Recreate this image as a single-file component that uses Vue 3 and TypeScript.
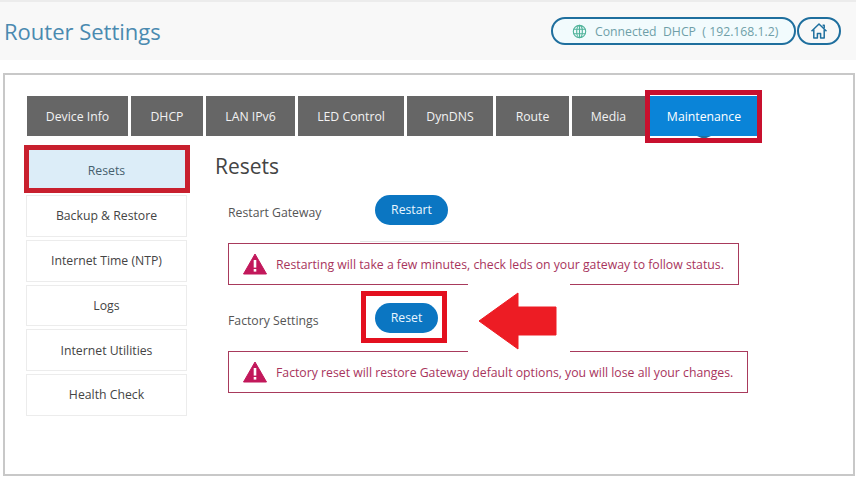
<script setup lang="ts">
const tabs = [
  { label: 'Device Info', width: 101 },
  { label: 'DHCP', width: 72 },
  { label: 'LAN IPv6', width: 89 },
  { label: 'LED Control', width: 106 },
  { label: 'DynDNS', width: 86 },
  { label: 'Route', width: 73 },
  { label: 'Media', width: 73 },
  { label: 'Maintenance', width: 108, active: true }
]

const menu = ['Resets', 'Backup & Restore', 'Internet Time (NTP)', 'Logs', 'Internet Utilities', 'Health Check']
</script>

<template>
  <div class="page">
    <header class="topbar">
      <h1 class="title">Router Settings</h1>
      <div class="status">
        <div class="pill">
          <svg class="globe" width="15" height="15" viewBox="0 0 16 16" fill="none" stroke="#4fb39a" stroke-width="1.2">
            <circle cx="8" cy="8" r="6.6" />
            <ellipse cx="8" cy="8" rx="3" ry="6.6" />
            <path d="M8 1.4v13.2M1.6 5.6h12.8M1.6 10.4h12.8" />
          </svg>
          <span class="pill-text">Connected&nbsp; DHCP &nbsp;( 192.168.1.2)</span>
        </div>
        <div class="home">
          <svg width="18" height="18" viewBox="0 0 18 18" fill="none" stroke="#1f6f9e" stroke-width="1.5" stroke-linejoin="round">
            <path d="M1.5 9.2 9 2l7.5 7.2" />
            <path d="M3.8 7.6V16h3.6v-4.6h3.2V16h3.6V7.6" />
            <path d="M12.6 3.2h1.6v3" />
          </svg>
        </div>
      </div>
    </header>

    <main class="panel">
      <nav class="tabs">
        <div
          v-for="tab in tabs"
          :key="tab.label"
          class="tab"
          :class="{ active: tab.active }"
          :style="{ width: tab.width + 'px' }"
        >
          {{ tab.label }}
          <template v-if="tab.active">
            <span class="tab-notch"></span>
            <span class="mark mark-tab"></span>
          </template>
        </div>
      </nav>

      <div class="body">
        <aside class="menu">
          <div v-for="(item, i) in menu" :key="item" class="menu-item" :class="{ current: i === 0 }">
            {{ item }}
            <span v-if="i === 0" class="mark mark-menu"></span>
          </div>
        </aside>

        <section class="content">
          <h2 class="heading">Resets</h2>

          <div class="row row-restart">
            <span class="row-label">Restart Gateway</span>
            <button class="btn btn-restart">Restart</button>
          </div>
          <div class="alert alert-restart">
            <svg class="warn" width="24" height="22" viewBox="0 0 24 22">
              <path d="M12 1 23.5 21H.5z" fill="#c2185b" stroke="#c2185b" stroke-linejoin="round" />
              <rect x="10.7" y="7" width="2.6" height="7.6" fill="#fff" />
              <rect x="10.7" y="16" width="2.6" height="2.6" fill="#fff" />
            </svg>
            <span>Restarting will take a few minutes, check leds on your gateway to follow status.</span>
          </div>

          <div class="row row-factory">
            <span class="row-label">Factory Settings</span>
            <button class="btn btn-reset">
              Reset
              <span class="mark mark-reset"></span>
            </button>
            <svg class="arrow" width="80" height="58" viewBox="0 0 80 58">
              <path d="M1 29 40 1v14h38v28H40v14z" fill="#ed1c24" stroke="#ed1c24" stroke-linejoin="round" />
            </svg>
          </div>
          <div class="alert alert-factory">
            <svg class="warn" width="24" height="22" viewBox="0 0 24 22">
              <path d="M12 1 23.5 21H.5z" fill="#c2185b" stroke="#c2185b" stroke-linejoin="round" />
              <rect x="10.7" y="7" width="2.6" height="7.6" fill="#fff" />
              <rect x="10.7" y="16" width="2.6" height="2.6" fill="#fff" />
            </svg>
            <span>Factory reset will restore Gateway default options, you will lose all your changes.</span>
          </div>
        </section>
      </div>
    </main>
  </div>
</template>

<style>
html,
body {
  margin: 0;
  background: #fff;
}
</style>

<style scoped>
.page {
  width: 866px;
  height: 496px;
  overflow: hidden;
  font-family: "Open Sans", "Liberation Sans", sans-serif;
  font-size: 12.25px;
  color: #4a4a4a;
  background: #fff;
}

.topbar {
  width: 856px;
  height: 60px;
  box-sizing: border-box;
  background: #f8f8f8;
  display: flex;
  align-items: center;
  justify-content: space-between;
  padding: 0 15px 0 4px;
  border-top: 2px solid #ececec;
}

.title {
  margin: 0;
  font-size: 22px;
  font-weight: 400;
  color: #4a8ab0;
}

.status {
  display: flex;
  align-items: center;
}

.pill {
  width: 245px;
  height: 28px;
  box-sizing: border-box;
  border: 2px solid #1f6f9e;
  border-radius: 14px;
  background: #f2fbfd;
  display: flex;
  align-items: center;
  padding-left: 19px;
  gap: 8px;
}

.pill-text {
  color: #6f9fa8;
  font-size: 12.25px;
  white-space: nowrap;
  padding-top: 1px;
}

.home {
  width: 44px;
  height: 28px;
  box-sizing: border-box;
  border: 2px solid #1f6f9e;
  border-radius: 14px;
  display: flex;
  align-items: center;
  justify-content: center;
  margin-left: 1px;
}

.panel {
  width: 852px;
  height: 403px;
  margin: 13px 0 0 3px;
  box-sizing: border-box;
  border: 2px solid #c8c8c8;
  padding: 21px 0 0 22px;
}

.tabs {
  display: flex;
  gap: 3px;
}

.tab {
  position: relative;
  height: 40px;
  box-sizing: border-box;
  background: #666;
  color: #f2f2f2;
  display: flex;
  align-items: center;
  justify-content: center;
  white-space: nowrap;
}

.tab.active {
  background: #0a84d8;
  color: #fff;
  margin-left: 2px;
}

.tab-notch {
  position: absolute;
  left: 50%;
  bottom: -3px;
  margin-left: -7px;
  border-left: 7px solid transparent;
  border-right: 7px solid transparent;
  border-top: 3px solid #1f6f9e;
}

.mark {
  position: absolute;
  box-sizing: border-box;
  pointer-events: none;
}

.mark-tab {
  left: -5px;
  top: -6px;
  width: 117px;
  height: 53px;
  border: 5px solid #c8102e;
}

.mark-menu {
  left: -3px;
  top: -4px;
  width: 166px;
  height: 48px;
  border: 5px solid #c8202e;
}

.mark-reset {
  left: -14px;
  top: -12px;
  width: 86px;
  height: 52px;
  border: 5px solid #e3101f;
}

.body {
  display: flex;
  margin-top: 12px;
  margin-left: -1px;
}

.menu {
  width: 161px;
  display: flex;
  flex-direction: column;
  gap: 3px;
}

.menu-item {
  position: relative;
  height: 41.75px;
  box-sizing: border-box;
  border: 1px solid #ececec;
  display: flex;
  align-items: center;
  justify-content: center;
  color: #444;
}

.menu-item.current {
  height: 42px;
  background: #dcedf8;
  border-color: #dcedf8;
  color: #46606e;
  margin-bottom: 2px;
  padding-top: 2px;
}

.content {
  margin-left: 28px;
  flex: 1;
}

.heading {
  margin: 3px 0 0;
  font-size: 21px;
  font-weight: 400;
  line-height: 30px;
  color: #444;
}

.row {
  position: relative;
  display: flex;
  align-items: center;
  padding-left: 13px;
}

.row-restart {
  margin-top: 14px;
  height: 30px;
}

.row-factory {
  margin-top: 18px;
  height: 30px;
}

.row-label {
  width: 147px;
  color: #555;
  position: relative;
  top: 2px;
}

.btn {
  position: relative;
  height: 30px;
  padding: 0 0 2px;
  border: none;
  border-radius: 15px;
  background: #0b76c2;
  color: #eaf6ff;
  font: 12.25px "Open Sans", "Liberation Sans", sans-serif;
}

.btn-restart {
  width: 73px;
}

.btn-reset {
  width: 63px;
}

.arrow {
  position: absolute;
  left: 263px;
  top: -11px;
}

.alert {
  height: 42px;
  box-sizing: border-box;
  margin: 18px 0 0 13px;
  border: 1px solid #a83a5c;
  display: flex;
  align-items: center;
  padding-left: 14px;
  gap: 9px;
  color: #a8345c;
  white-space: nowrap;
  position: relative;
}

.alert-restart {
  width: 511px;
}

.alert-factory {
  width: 520px;
  margin-top: 18px;
}

.alert-restart::before {
  content: "";
  position: absolute;
  left: 131px;
  top: -3px;
  width: 100px;
  height: 1px;
  background: #e4e4e4;
}

.alert-restart::after,
.alert-factory::before {
  content: "";
  position: absolute;
  left: 239px;
  width: 102px;
  height: 3px;
  background: #fff;
}

.alert-restart::after {
  bottom: -2px;
}

.alert-factory::before {
  top: -2px;
}
</style>
